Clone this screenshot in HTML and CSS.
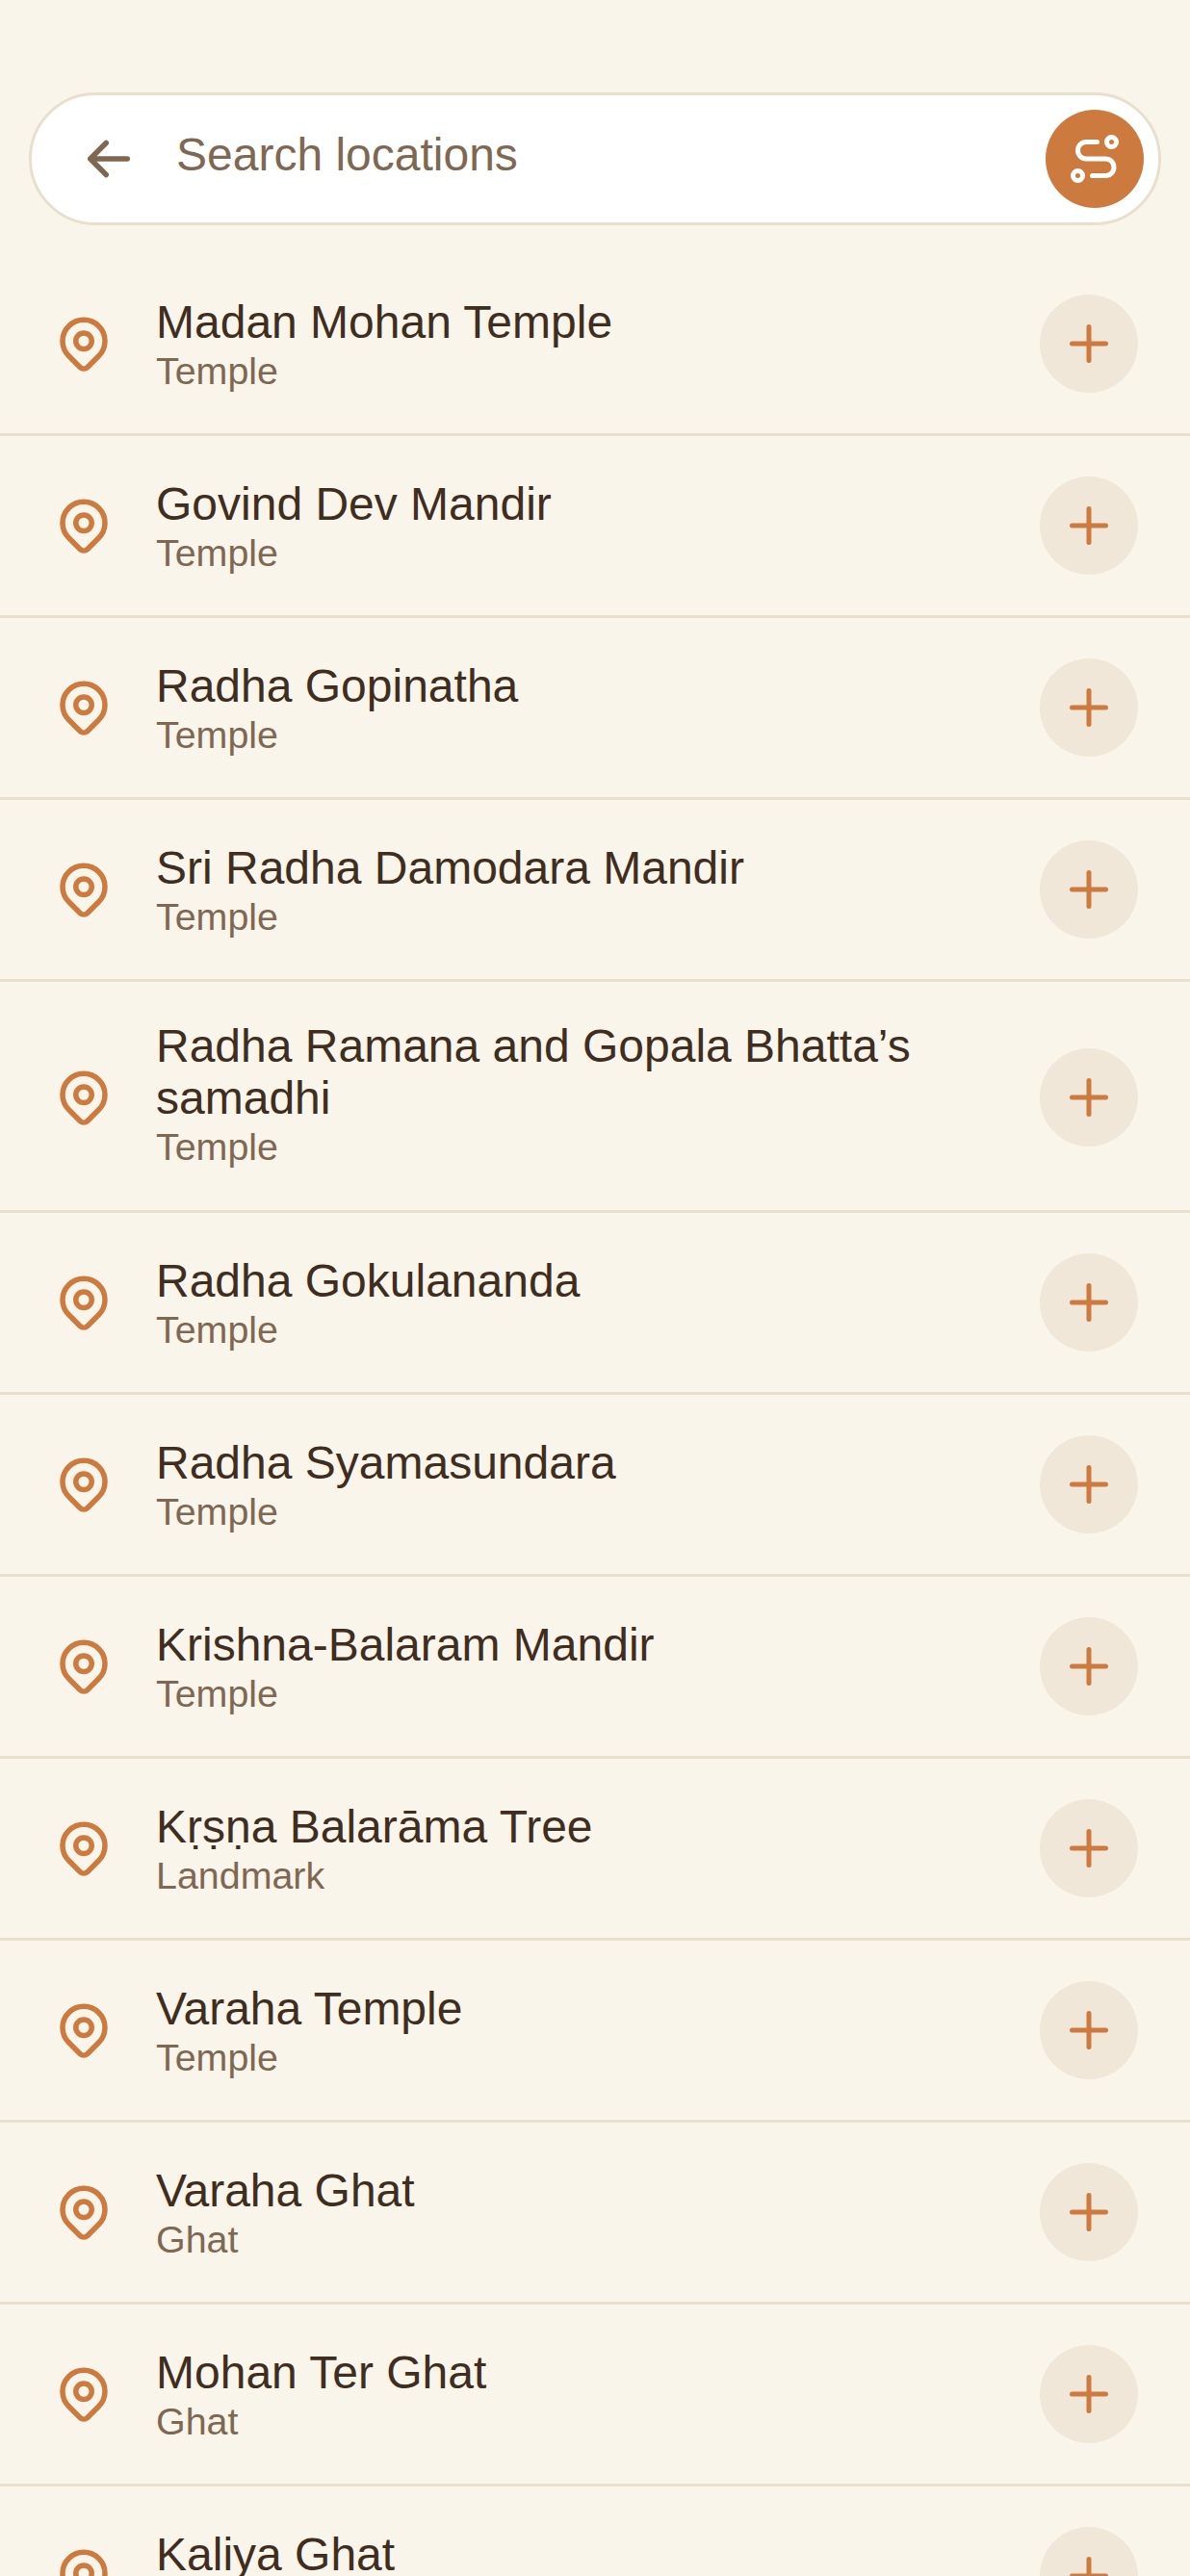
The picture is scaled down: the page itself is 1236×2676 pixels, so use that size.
FILE: index.html
```html
<!DOCTYPE html>
<html lang="en">
<head>
<meta charset="utf-8">
<title>Search locations</title>
<link rel="stylesheet" href="styles.css">
</head>
<body>
<svg class="defs" width="0" height="0" aria-hidden="true">
  <symbol id="pin" viewBox="0 0 24 24"><path d="M9 11a3 3 0 1 0 6 0a3 3 0 0 0-6 0"/><path d="M17.657 16.657l-4.243 4.243a2 2 0 0 1-2.827 0l-4.244-4.243a8 8 0 1 1 11.314 0z"/></symbol>
  <symbol id="plus" viewBox="0 0 24 24"><path d="M12 5v14M5 12h14"/></symbol>
</svg>
<main class="screen">
  <header class="search">
    <svg class="icon back" viewBox="0 0 24 24"><path d="M5 12h14M5 12l6 6M5 12l6-6"/></svg>
    <span class="placeholder">Search locations</span>
    <button class="route"><svg class="icon route-icon" viewBox="0 0 24 24"><path d="M3 19a2 2 0 1 0 4 0a2 2 0 0 0-4 0"/><path d="M19 7a2 2 0 1 0 0-4a2 2 0 0 0 0 4z"/><path d="M11 19h5.5a3.5 3.5 0 0 0 0-7h-8a3.5 3.5 0 0 1 0-7h4.5"/></svg></button>
  </header>
  <ul class="list">
    <li class="row"><svg class="icon pin"><use href="#pin"/></svg><div class="info"><div class="name">Madan Mohan Temple</div><div class="kind">Temple</div></div><button class="add"><svg class="icon plus"><use href="#plus"/></svg></button></li>
    <li class="row"><svg class="icon pin"><use href="#pin"/></svg><div class="info"><div class="name">Govind Dev Mandir</div><div class="kind">Temple</div></div><button class="add"><svg class="icon plus"><use href="#plus"/></svg></button></li>
    <li class="row"><svg class="icon pin"><use href="#pin"/></svg><div class="info"><div class="name">Radha Gopinatha</div><div class="kind">Temple</div></div><button class="add"><svg class="icon plus"><use href="#plus"/></svg></button></li>
    <li class="row"><svg class="icon pin"><use href="#pin"/></svg><div class="info"><div class="name">Sri Radha Damodara Mandir</div><div class="kind">Temple</div></div><button class="add"><svg class="icon plus"><use href="#plus"/></svg></button></li>
    <li class="row row-tall"><svg class="icon pin"><use href="#pin"/></svg><div class="info"><div class="name">Radha Ramana and Gopala Bhatta’s samadhi</div><div class="kind">Temple</div></div><button class="add"><svg class="icon plus"><use href="#plus"/></svg></button></li>
    <li class="row"><svg class="icon pin"><use href="#pin"/></svg><div class="info"><div class="name">Radha Gokulananda</div><div class="kind">Temple</div></div><button class="add"><svg class="icon plus"><use href="#plus"/></svg></button></li>
    <li class="row"><svg class="icon pin"><use href="#pin"/></svg><div class="info"><div class="name">Radha Syamasundara</div><div class="kind">Temple</div></div><button class="add"><svg class="icon plus"><use href="#plus"/></svg></button></li>
    <li class="row"><svg class="icon pin"><use href="#pin"/></svg><div class="info"><div class="name">Krishna-Balaram Mandir</div><div class="kind">Temple</div></div><button class="add"><svg class="icon plus"><use href="#plus"/></svg></button></li>
    <li class="row"><svg class="icon pin"><use href="#pin"/></svg><div class="info"><div class="name">Kṛṣṇa Balarāma Tree</div><div class="kind">Landmark</div></div><button class="add"><svg class="icon plus"><use href="#plus"/></svg></button></li>
    <li class="row"><svg class="icon pin"><use href="#pin"/></svg><div class="info"><div class="name">Varaha Temple</div><div class="kind">Temple</div></div><button class="add"><svg class="icon plus"><use href="#plus"/></svg></button></li>
    <li class="row"><svg class="icon pin"><use href="#pin"/></svg><div class="info"><div class="name">Varaha Ghat</div><div class="kind">Ghat</div></div><button class="add"><svg class="icon plus"><use href="#plus"/></svg></button></li>
    <li class="row"><svg class="icon pin"><use href="#pin"/></svg><div class="info"><div class="name">Mohan Ter Ghat</div><div class="kind">Ghat</div></div><button class="add"><svg class="icon plus"><use href="#plus"/></svg></button></li>
    <li class="row"><svg class="icon pin"><use href="#pin"/></svg><div class="info"><div class="name">Kaliya Ghat</div><div class="kind">Ghat</div></div><button class="add"><svg class="icon plus"><use href="#plus"/></svg></button></li>
  </ul>
</main>
</body>
</html>
```
FILE: styles.css
```css
* { box-sizing: border-box; }
html, body { margin: 0; height: 100%; }
body { background: #f9f5eb; font-family: "Liberation Sans", Arial, sans-serif; overflow: hidden; }
.defs { position: absolute; }
.screen { height: 2676px; overflow: hidden; padding-top: 96px; }
.icon { fill: none; stroke-linecap: round; stroke-linejoin: round; stroke-width: 2; }
.search { display: flex; align-items: center; height: 138px; margin: 0 30px; background: #fff; border: 3px solid #e8dfcc; border-radius: 69px; padding: 0 15px 0 47px; }
.back { width: 66px; height: 66px; stroke: #7f6852; flex: none; }
.placeholder { flex: 1; margin-left: 37px; padding-bottom: 9px; font-size: 48px; color: #7f6852; }
.route { width: 102px; height: 102px; border: 0; padding: 0; border-radius: 50%; background: #cd7a3e; display: flex; align-items: center; justify-content: center; flex: none; }
.route-icon { width: 60px; height: 60px; stroke: #fff; }
.list { list-style: none; margin: 30px 0 0; padding: 0; }
.row { display: flex; align-items: center; padding: 42px 54px; border-bottom: 3px solid #e8dfcc; }
.row-tall { padding-top: 40px; padding-bottom: 44px; }
.row-tall .pin, .row-tall .add { margin-top: 7px; }
.pin { width: 66px; height: 66px; stroke: #cd7a3e; flex: none; }
.info { flex: 1; margin-left: 42px; min-width: 0; padding-right: 66px; }
.name { font-size: 48px; line-height: 54px; color: #3f2d20; }
.kind { font-size: 39.4px; line-height: 45px; margin: 1px 0 -1px; color: #7f6852; }
.add { width: 102px; height: 102px; border: 0; padding: 0; border-radius: 50%; background: #f0e7d8; display: flex; align-items: center; justify-content: center; flex: none; }
.plus { width: 60px; height: 60px; stroke: #cd7a3e; }
```
